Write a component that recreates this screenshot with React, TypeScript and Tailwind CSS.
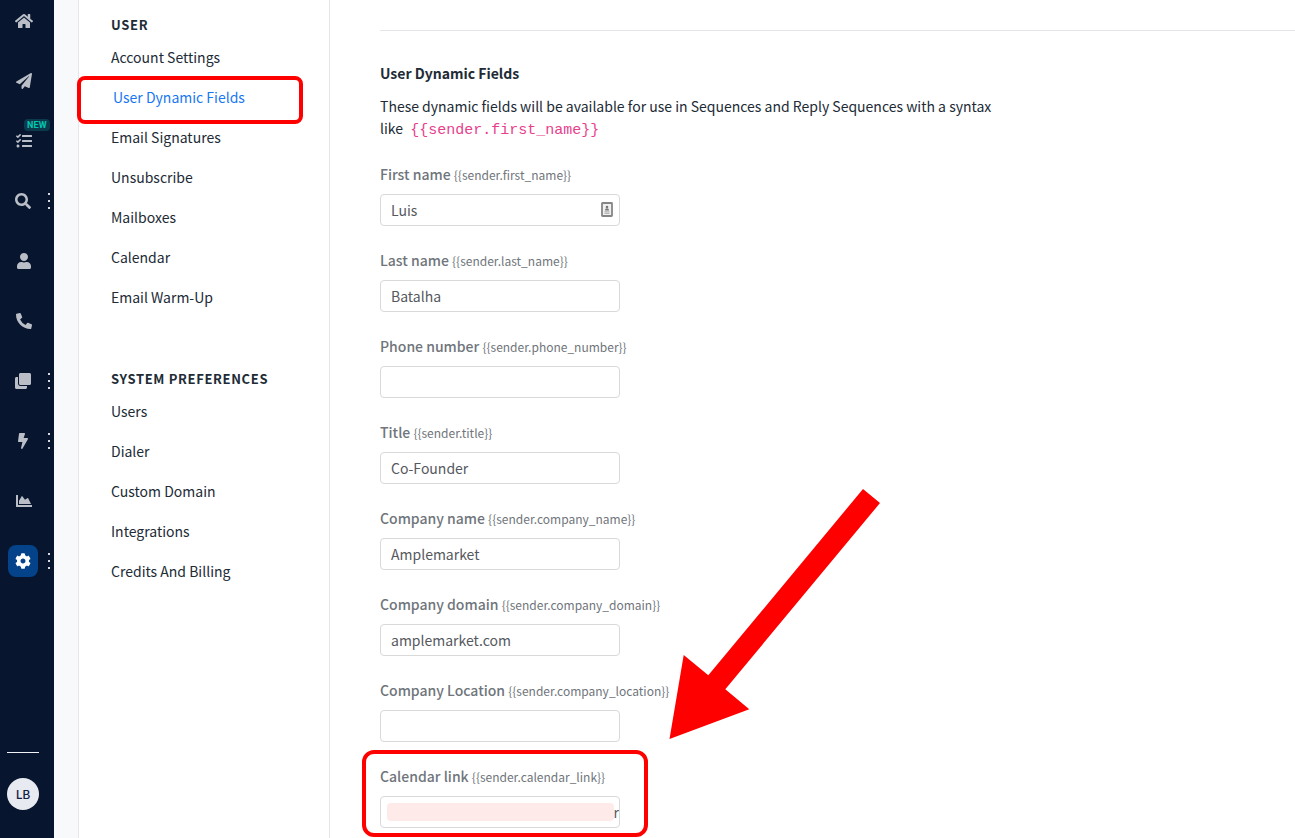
import clsx from 'clsx';
import type { IconType } from 'react-icons';
import {
  FaHome,
  FaPaperPlane,
  FaTasks,
  FaSearch,
  FaUser,
  FaPhoneAlt,
  FaClone,
  FaBolt,
  FaChartArea,
  FaCog
} from 'react-icons/fa';

type RailItem = {
  label: string;
  icon: IconType;
  size?: number;
  hasMenu?: boolean;
  isNew?: boolean;
  active?: boolean;
};

const railItems: RailItem[] = [
  { label: 'Home', icon: FaHome, size: 18 },
  { label: 'Sequences', icon: FaPaperPlane },
  { label: 'Tasks', icon: FaTasks, isNew: true },
  { label: 'Search', icon: FaSearch, hasMenu: true },
  { label: 'Contacts', icon: FaUser },
  { label: 'Calls', icon: FaPhoneAlt },
  { label: 'Templates', icon: FaClone, hasMenu: true },
  { label: 'Automations', icon: FaBolt, hasMenu: true },
  { label: 'Analytics', icon: FaChartArea },
  { label: 'Settings', icon: FaCog, hasMenu: true, active: true },
];

const sections = [
  {
    title: 'USER',
    links: [
      'Account Settings',
      'User Dynamic Fields',
      'Email Signatures',
      'Unsubscribe',
      'Mailboxes',
      'Calendar',
      'Email Warm-Up',
    ],
  },
  {
    title: 'SYSTEM PREFERENCES',
    links: ['Users', 'Dialer', 'Custom Domain', 'Integrations', 'Credits And Billing'],
  },
];

const activeLink = 'User Dynamic Fields';

const fields = [
  { id: 'first_name', label: 'First name', value: 'Luis' },
  { id: 'last_name', label: 'Last name', value: 'Batalha' },
  { id: 'phone_number', label: 'Phone number', value: '' },
  { id: 'title', label: 'Title', value: 'Co-Founder' },
  { id: 'company_name', label: 'Company name', value: 'Amplemarket' },
  { id: 'company_domain', label: 'Company domain', value: 'amplemarket.com' },
  { id: 'company_location', label: 'Company Location', value: '' },
  { id: 'calendar_link', label: 'Calendar link', value: 'r' },
];

const MenuDots = () => (
  <span className="flex flex-col gap-[5px]">
    <span className="size-[2px] bg-[#d5d9df]" />
    <span className="size-[2px] bg-[#d5d9df]" />
    <span className="size-[2px] bg-[#d5d9df]" />
  </span>
);

const ContactCardIcon = () => (
  <svg viewBox="0 0 12 15" className="h-[15px] w-3" aria-hidden="true">
    <rect x="1" y="1" width="10" height="13" rx="0.5" fill="#f0f0f0" stroke="#858585" strokeWidth="1.8" />
    <circle cx="6" cy="5" r="1.3" fill="#777" />
    <path d="M4 8.6c0-1.6.9-2.4 2-2.4s2 .8 2 2.4z" fill="#777" />
    <path d="M3.5 9.8h5M3.5 11.3h5" stroke="#aaa" strokeWidth="1" />
  </svg>
);

const Rail = () => (
  <nav className="sticky top-0 flex h-screen w-[54px] shrink-0 flex-col bg-[#07152e] pt-[5px] pb-7">
    <ul className="flex flex-col gap-7">
      {railItems.map(({ label, icon: Icon, size = 16, hasMenu, isNew, active }) => (
        <li key={label} className="relative flex items-center gap-[10px] pl-2">
          <button
            aria-label={label}
            className={clsx(
              'flex h-8 items-center justify-center rounded-lg',
              hasMenu ? 'w-[30px]' : 'w-8',
              active ? 'bg-[#044289] text-white' : 'text-[#b9bec7]'
            )}
          >
            <Icon size={size} />
          </button>
          {hasMenu && <MenuDots />}
          {isNew && (
            <span className="absolute -top-[6px] left-6 rounded bg-[#0b3a4d] px-[3px] font-['Roboto',sans-serif] text-[9px] leading-3 font-bold tracking-wide text-[#00c9b1]">
              NEW
            </span>
          )}
        </li>
      ))}
    </ul>
    <div className="mt-auto flex w-[46px] flex-col items-center gap-[25px]">
      <hr className="w-8 border-[#f0f2f5]" />
      <button className="size-8 rounded-full bg-[#e7eaf0] text-xs font-medium text-[#132144]">LB</button>
    </div>
  </nav>
);

const SettingsMenu = () => (
  <aside className="flex w-[252px] shrink-0 flex-col gap-[52px] border-x border-[#e4e6ea] bg-white pt-[15px]">
    {sections.map((section) => (
      <section key={section.title}>
        <h2 className="mb-[2px] px-8 text-[13px] leading-5 font-bold tracking-wider">{section.title}</h2>
        <ul>
          {section.links.map((link) => (
            <li key={link} className="relative px-8">
              <a
                href="#"
                className={clsx('block leading-10', link === activeLink && 'pl-[2px] text-[#1877f2]')}
              >
                {link}
              </a>
              {link === activeLink && (
                <span className="pointer-events-none absolute -top-px -left-[2px] h-12 w-[226px] rounded-lg border-4 border-[#ff0000]" />
              )}
            </li>
          ))}
        </ul>
      </section>
    ))}
  </aside>
);

const CalendarCallout = () => (
  <>
    <span className="absolute top-[38px] left-[7px] h-[18px] w-[227px] rounded-sm bg-[#ffeaea]" />
    <span className="pointer-events-none absolute -top-[15px] -left-[18px] h-[87px] w-[286px] rounded-xl border-4 border-[#ff0000]" />
    <svg
      viewBox="0 0 211 250"
      className="pointer-events-none absolute -top-[276px] left-[289px] h-[250px] w-[211px]"
      aria-hidden="true"
    >
      <polygon points="194,0 211,14 56.3,200.3 80.3,220.3 0.5,250 14.7,166 39.3,186.3" fill="#ff0000" />
    </svg>
  </>
);

const App = () => {
  return (
    <div className="flex min-h-screen bg-[#f8f9fb] font-['Noto_Sans_CJK_SC',sans-serif] text-sm text-[#212b36]">
      <Rail />
      <div className="ml-6 flex min-w-0 flex-1">
        <SettingsMenu />
        <main className="min-w-0 flex-1 bg-white pt-[30px] pl-[50px]">
          <hr className="border-[#e4e6ea]" />
          <h1 className="mt-[31px] leading-[22px] font-bold">User Dynamic Fields</h1>
          <p className="mt-[11px] max-w-[620px] leading-[22px]">
            These dynamic fields will be available for use in Sequences and Reply Sequences with a syntax like{' '}
            <code className="ml-1 font-['Liberation_Mono',monospace] text-[15px] leading-none text-[#e83e8c]">
              {'{{sender.first_name}}'}
            </code>
          </p>

          <form className="mt-6 flex flex-col gap-[23px] pb-[10px]">
            {fields.map((field) => (
              <div key={field.id} className="relative flex flex-col gap-[9px]">
                <label htmlFor={field.id} className="leading-[22px] font-medium text-[#6f757b]">
                  {field.label}{' '}
                  <span className="text-xs leading-none font-normal">{`{{sender.${field.id}}}`}</span>
                </label>
                <div className="relative w-60">
                  <input
                    id={field.id}
                    type="text"
                    defaultValue={field.value}
                    className={clsx(
                      'block h-8 w-full rounded border border-[#d9d9d9] bg-white text-[#55595e]',
                      field.id === 'calendar_link' ? 'text-right' : 'px-[10px]'
                    )}
                  />
                  {field.id === 'first_name' && (
                    <span className="absolute top-2 right-[7px]">
                      <ContactCardIcon />
                    </span>
                  )}
                </div>
                {field.id === 'calendar_link' && <CalendarCallout />}
              </div>
            ))}
          </form>
        </main>
      </div>
    </div>
  );
};

export default App;
